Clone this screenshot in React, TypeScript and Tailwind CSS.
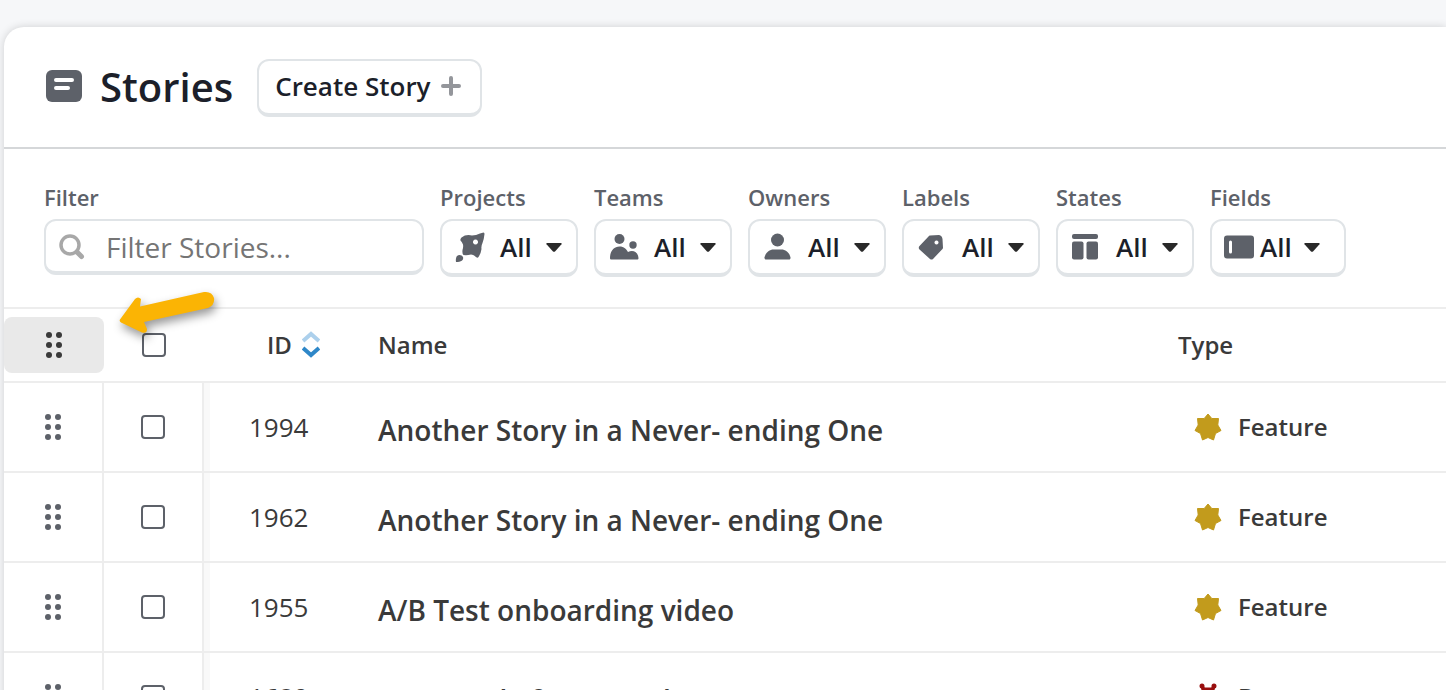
import React from 'react';

interface Story {
  id: number;
  name: string;
  type: 'Feature' | 'Bug';
}

interface FilterMenu {
  label: string;
  icon: React.ReactNode;
  tight?: boolean;
}

const stories: Story[] = [
  { id: 1994, name: 'Another Story in a Never- ending One', type: 'Feature' },
  { id: 1962, name: 'Another Story in a Never- ending One', type: 'Feature' },
  { id: 1955, name: 'A/B Test onboarding video', type: 'Feature' },
  { id: 1680, name: 'Is example for menu layout', type: 'Bug' },
];

const filterMenus: FilterMenu[] = [
  {
    label: 'Projects',
    icon: (
      <svg width="32" height="32" viewBox="0 0 32 32" fill="#5d6169" aria-hidden="true">
        <path
          fillRule="evenodd"
          d="M29.500 1.500Q30.500 1.500 30.500 3Q30 8 28.500 12Q27 15 27.500 18Q27 22 24.500 26Q23.500 27.500 22 26Q20 23.500 17 23.500Q13 24.500 9.500 24Q8 23 8.500 19Q9.500 16 9 13.500Q8 11 6.500 9.500Q6 8 7.500 6.500Q12 3 18 4.500Q22 4.500 26 2.500ZM21.500 8.500a2.500 2.500 0 1 0 .01 0Z"
        />
        <path d="M3 25C5 23 8 24 9 26C10 29 7 31 2 31C1.500 29 2 26 3 25Z" />
      </svg>
    ),
  },
  {
    label: 'Teams',
    icon: (
      <svg width="32" height="32" viewBox="0 0 32 32" fill="#5d6169" aria-hidden="true">
        <circle cx="11.500" cy="8" r="5" />
        <circle cx="25" cy="14" r="3.700" />
        <path d="M2 27C2 20 6 15.500 11.500 15.500C16 15.500 18.500 18 20 21C25 18.500 30 21 30.500 27C30.500 28 30 28.500 29 28.500H3.500C2.500 28.500 2 28 2 27Z" />
      </svg>
    ),
  },
  {
    label: 'Owners',
    icon: (
      <svg width="32" height="32" viewBox="0 0 32 32" fill="#5d6169" aria-hidden="true">
        <circle cx="15.500" cy="9" r="6.500" />
        <path d="M2.500 26.500C3.500 21.500 7.500 18.500 11.500 18.500H19.500C23.500 18.500 27.500 21.500 28.500 26.500C28.500 28 28 28.500 27 28.500H4C3 28.500 2.500 28 2.500 26.500Z" />
      </svg>
    ),
  },
  {
    label: 'Labels',
    icon: (
      <svg width="32" height="32" viewBox="0 0 32 32" fill="#5d6169" aria-hidden="true">
        <path
          fillRule="evenodd"
          d="M14 4.500L23 4Q26 4.500 26.500 8L27 17Q26.500 18 26 18.500L17 28Q15.500 29 14 28L3.500 18.500Q2 16.500 3.500 15L12.500 5.500Q13 4.500 14 4.500ZM20.500 9.500a2 2 0 1 0 .01 0Z"
        />
      </svg>
    ),
  },
  {
    label: 'States',
    icon: (
      <svg width="32" height="32" viewBox="0 0 32 32" fill="#5d6169" aria-hidden="true">
        <rect x="2" y="3" width="26" height="5" rx="2" />
        <rect x="2" y="10.500" width="11.500" height="18" rx="2" />
        <rect x="16.500" y="10.500" width="11.500" height="18" rx="2" />
      </svg>
    ),
  },
  {
    label: 'Fields',
    tight: true,
    icon: (
      <svg width="32" height="32" viewBox="0 0 32 32" fill="#5d6169" aria-hidden="true">
        <path
          fillRule="evenodd"
          d="M3 4.500H27a3 3 0 0 1 3 3V24.500a3 3 0 0 1-3 3H3a3 3 0 0 1-3-3V7.500a3 3 0 0 1 3-3ZM6.500 9.500a1.500 1.500 0 0 0-1.500 1.500V21a1.500 1.500 0 0 0 3 0V11a1.500 1.500 0 0 0-1.500-1.500Z"
        />
      </svg>
    ),
  },
];

const DragDots: React.FC = () => (
  <svg width="18" height="26" viewBox="0 0 18 26" fill="currentColor" aria-hidden="true">
    {[3, 13, 23].map((cy) => (
      <React.Fragment key={cy}>
        <circle cx="4" cy={cy} r="3" />
        <circle cx="14" cy={cy} r="3" />
      </React.Fragment>
    ))}
  </svg>
);

const Checkbox: React.FC<{ label: string }> = ({ label }) => (
  <input
    type="checkbox"
    aria-label={label}
    className="block mx-auto size-6 appearance-none rounded border-2 border-[#5d6169] bg-white checked:bg-[#5d6169]"
  />
);

const FilterButton: React.FC<FilterMenu> = ({ label, icon, tight }) => {
  const id = `filter-${label.toLowerCase()}`;
  return (
    <div className="flex flex-col">
      <label htmlFor={id} className="text-[22px] leading-[30px] font-semibold text-[#5d6169] mb-[7px]">
        {label}
      </label>
      <button
        id={id}
        type="button"
        className={`flex h-[58px] items-center rounded-xl border-2 border-b-4 border-[#e0e4e7] bg-white text-[26px] font-semibold text-[#1c1f2a] ${
          tight ? 'w-[136px] pl-3 gap-1' : 'w-[138px] pl-3 gap-3.5'
        }`}
      >
        {icon}
        <span>All</span>
        <svg width="16" height="9" viewBox="0 0 16 9" fill="#292929" className={tight ? 'ml-2' : ''} aria-hidden="true">
          <path d="M1 0H15Q16 .5 15.500 1.200L9 8.400Q8 9.200 7 8.400L.5 1.200Q0 .5 1 0Z" />
        </svg>
      </button>
    </div>
  );
};

const TypeIcon: React.FC<{ type: Story['type'] }> = ({ type }) =>
  type === 'Feature' ? (
    <svg width="28" height="28" viewBox="0 0 28 28" fill="#c29b1c" stroke="#c29b1c" strokeWidth="1" strokeLinejoin="round" aria-hidden="true">
      <path d="M14 1L17.800 5.500L24.500 5.500L23.800 12L27 17.500L21.500 20.500L19.500 27L14 24.500L8.500 27L6.500 20.500L1 17.500L4.200 12L3.500 5.500L10.200 5.500Z" />
    </svg>
  ) : (
    <svg width="28" height="28" viewBox="0 0 28 28" fill="#990f0f" stroke="#990f0f" strokeWidth="3" strokeLinecap="round" aria-hidden="true">
      <path d="M8 3L10 6H18L20 3L18 11H10Z" strokeLinejoin="round" />
      <circle cx="8" cy="3" r="1" />
      <circle cx="20" cy="3" r="1" />
      <path d="M4 14H24M5 23L9 19M23 23L19 19" fill="none" />
      <ellipse cx="14" cy="16" rx="6" ry="8" />
    </svg>
  );

export default function App() {
  return (
    <div className="h-screen overflow-hidden bg-[#f6f7f9] pt-[27px] pl-1 font-['Open_Sans',sans-serif] text-[#3a3a3a]">
      <main className="min-h-full rounded-tl-[20px] bg-white shadow-[0_0_8px_rgba(0,0,0,0.16)]">
        <header className="flex items-center border-b-2 border-[#d5d7d9] pl-[42px] pb-[30px] pt-8">
          <svg width="36" height="32" viewBox="0 0 36 32" className="mr-[18px] mb-1" aria-hidden="true">
            <rect width="36" height="32" rx="6" fill="#5d6169" />
            <path d="M10 10H26M10 18H22" stroke="#fff" strokeWidth="4" strokeLinecap="round" />
          </svg>
          <h1 className="mr-6 pb-0.5 text-[40px] leading-[56px] font-semibold text-[#1c1f2a]">Stories</h1>
          <button
            type="button"
            className="flex h-[58px] items-center gap-2.5 rounded-xl border-2 border-b-4 border-[#e0e4e7] bg-white pr-[19px] pb-0.5 pl-4 text-[26px] font-semibold text-[#1c1f2a]"
          >
            Create Story
            <svg width="20" height="20" viewBox="0 0 20 20" aria-hidden="true">
              <path d="M10 2V18M2 10H18" stroke="#94969b" strokeWidth="4" strokeLinecap="round" />
            </svg>
          </button>
        </header>

        <section className="flex gap-4 pl-10 pt-[33px] pb-[30px]">
          <div className="flex w-[380px] flex-col">
            <label htmlFor="story-filter" className="text-[22px] leading-[30px] font-semibold text-[#5d6169] mb-[7px]">
              Filter
            </label>
            <div className="flex h-14 items-center rounded-xl border-2 border-b-4 border-[#e0e4e7] pt-0.5 pl-3">
              <svg width="28" height="28" viewBox="0 0 28 28" fill="none" stroke="#a8a8a8" strokeLinecap="round" aria-hidden="true">
                <circle cx="12" cy="12" r="9" strokeWidth="3.500" />
                <path d="M19 19L23.500 23.500" strokeWidth="5" />
              </svg>
              <input
                id="story-filter"
                type="text"
                placeholder="Filter Stories..."
                className="ml-5 w-0 flex-1 bg-transparent text-[28px] outline-none placeholder:text-[#757575]"
              />
            </div>
          </div>
          {filterMenus.map((menu) => (
            <FilterButton key={menu.label} {...menu} />
          ))}
        </section>

        <div className="relative">
          <table className="w-full table-fixed border-collapse text-left">
            <colgroup>
              <col className="w-[99px]" />
              <col className="w-[100px]" />
              <col className="w-[161px]" />
              <col className="w-[800px]" />
              <col />
            </colgroup>
            <thead>
              <tr className="h-[74px] border-y-2 border-[#ededed] text-[24px]">
                <th>
                  <button
                    type="button"
                    aria-label="Reorder stories"
                    className="flex h-14 w-[100px] items-center justify-center rounded-lg bg-[#e9e9e9] text-[#3a3a3a]"
                  >
                    <DragDots />
                  </button>
                </th>
                <th className="pl-0.5">
                  <Checkbox label="Select all stories" />
                </th>
                <th className="pl-16 font-semibold">
                  <span className="flex items-center gap-2.5">
                    ID
                    <svg width="18" height="28" viewBox="0 0 18 28" fill="none" strokeWidth="4" aria-hidden="true">
                      <path d="M1 10L9 3L17 10" stroke="#acd0ec" />
                      <path d="M1 17L9 24L17 17" stroke="#2e87c8" />
                    </svg>
                  </span>
                </th>
                <th className="pl-[14px] font-semibold">Name</th>
                <th className="pl-[14px] font-semibold">Type</th>
              </tr>
            </thead>
            <tbody>
              {stories.map((story) => (
                <tr key={story.id} className="h-[90px] border-b-2 border-[#ededed]">
                  <td className="border-r-2 border-[#ededed] text-[#5d6169]">
                    <span className="flex justify-center">
                      <DragDots />
                    </span>
                  </td>
                  <td className="border-r-2 border-[#ededed]">
                    <Checkbox label={`Select story ${story.id}`} />
                  </td>
                  <td className="pl-[45px] text-[26px] shadow-[inset_6px_0_#f9f9f9]">{story.id}</td>
                  <td className="pl-[14px] pt-1.5 text-[28px] font-semibold whitespace-nowrap">{story.name}</td>
                  <td className="pl-[30px] text-[24px] font-semibold">
                    <span className="flex items-center gap-4">
                      <TypeIcon type={story.type} />
                      {story.type}
                    </span>
                  </td>
                </tr>
              ))}
            </tbody>
          </table>

          {/* pointer towards the reorder handle */}
          <svg
            width="110"
            height="60"
            viewBox="0 0 110 60"
            className="pointer-events-none absolute -top-6 left-[110px] drop-shadow-[2px_5px_5px_rgba(0,0,0,0.4)]"
            aria-hidden="true"
          >
            <path
              d="M6 36.500L21 16Q24 13 27 16L26 23.500L90 9Q98 8 100 15Q101 22 94 25L30 39L33 46Q33 51 28 49.500L7 39.500Q5 38 6 36.500Z"
              fill="#fbb404"
            />
          </svg>
        </div>
      </main>
    </div>
  );
}
